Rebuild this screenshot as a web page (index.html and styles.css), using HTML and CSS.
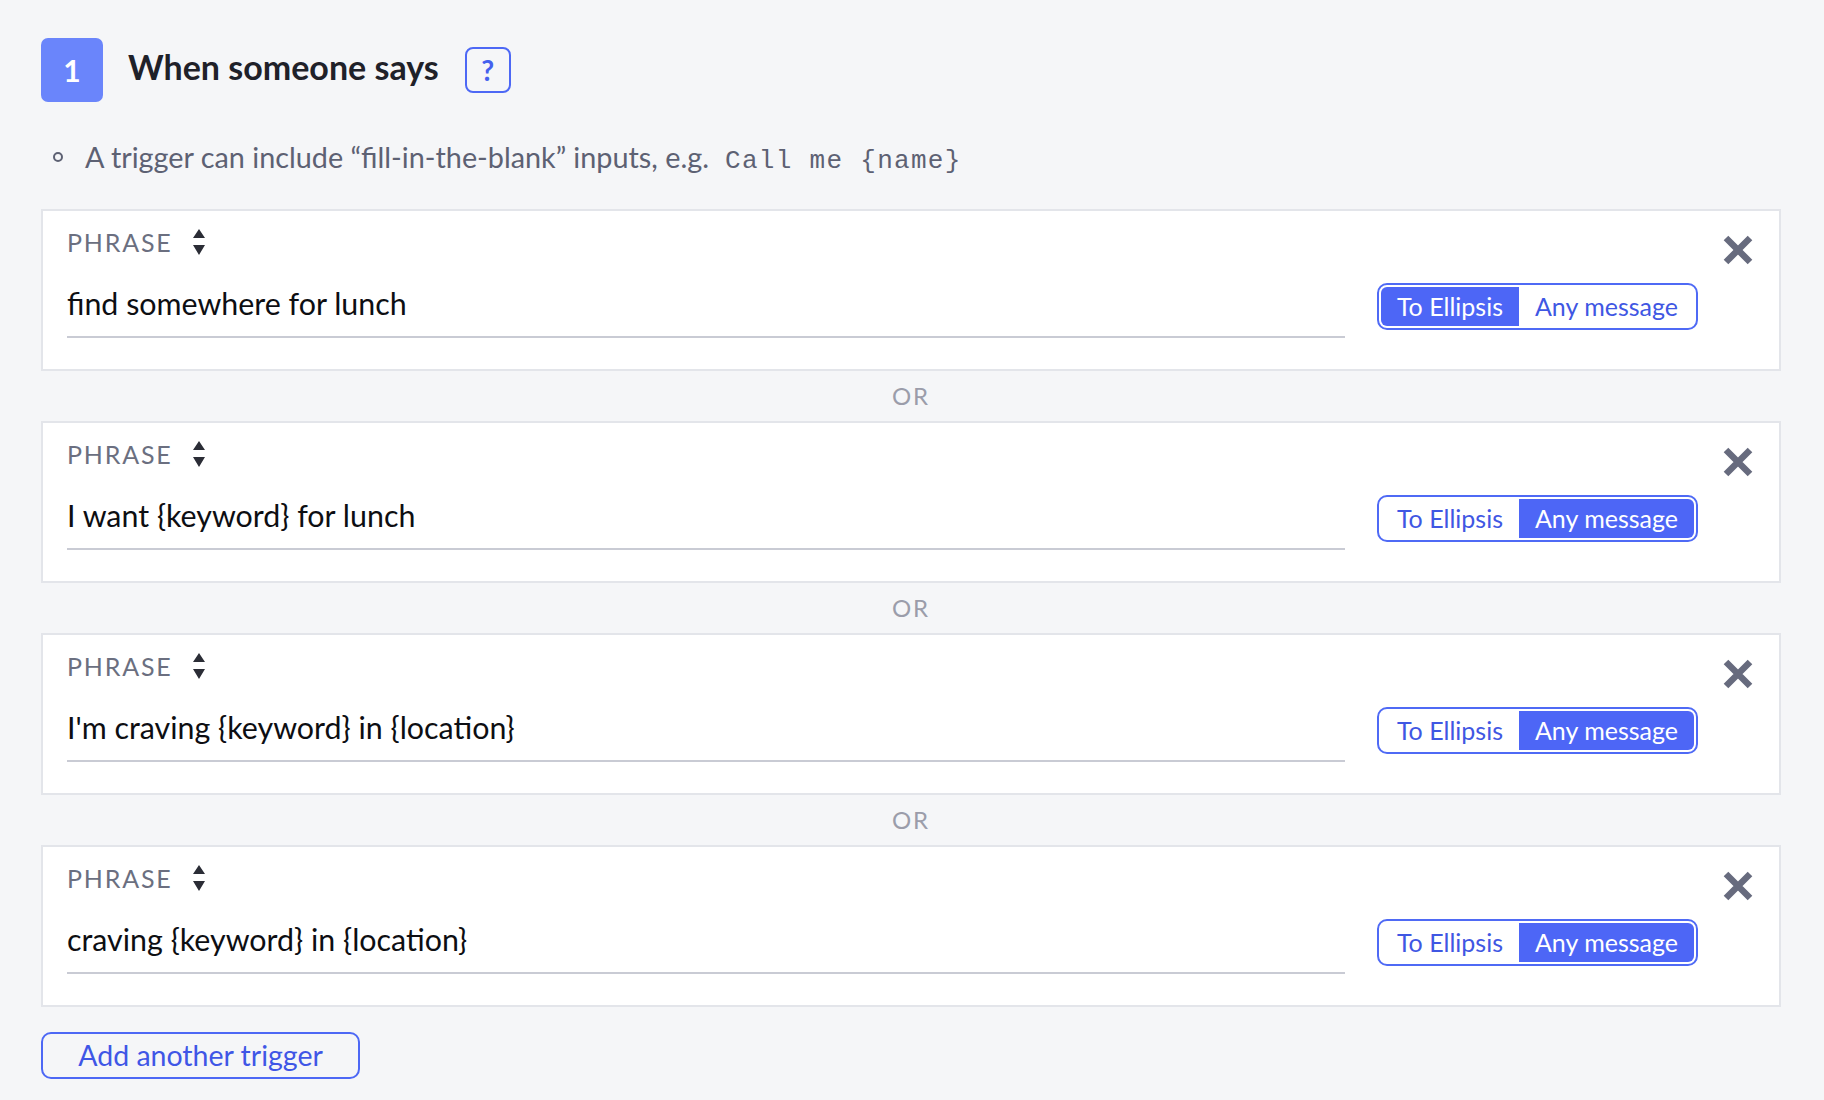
FILE: index.html
```html
<!DOCTYPE html>
<html lang="en">
<head>
<meta charset="utf-8">
<title>When someone says</title>
<link rel="stylesheet" href="styles.css">
</head>
<body>
<div class="page">
  <header class="step-head">
    <div class="step-num">1</div>
    <h2 class="step-title">When someone says</h2>
    <button class="help" type="button">?</button>
  </header>

  <ul class="hints">
    <li><span class="dot"></span><span class="hint-text">A trigger can include “fill-in-the-blank” inputs, e.g.</span><code class="code">Call me {name}</code></li>
  </ul>

  <div class="triggers">
    <div class="card">
      <div class="label">PHRASE <svg class="sort" width="12" height="26" viewBox="0 0 12 26"><path d="M6 0 L12 9 L0 9 Z M0 16 L12 16 L6 26 Z" fill="#2b2d36"/></svg></div>
      <div class="phrase">find somewhere for lunch</div>
      <div class="toggle"><span class="seg first active">To Ellipsis</span><span class="seg last">Any message</span></div>
      <button class="close" type="button" aria-label="Remove"><svg width="30" height="30" viewBox="0 0 30 30"><path d="M3 3 L27 27 M27 3 L3 27" stroke="#676b7e" stroke-width="6.5" fill="none"/></svg></button>
    </div>
    <div class="or">OR</div>
    <div class="card">
      <div class="label">PHRASE <svg class="sort" width="12" height="26" viewBox="0 0 12 26"><path d="M6 0 L12 9 L0 9 Z M0 16 L12 16 L6 26 Z" fill="#2b2d36"/></svg></div>
      <div class="phrase">I want {keyword} for lunch</div>
      <div class="toggle"><span class="seg first">To Ellipsis</span><span class="seg last active">Any message</span></div>
      <button class="close" type="button" aria-label="Remove"><svg width="30" height="30" viewBox="0 0 30 30"><path d="M3 3 L27 27 M27 3 L3 27" stroke="#676b7e" stroke-width="6.5" fill="none"/></svg></button>
    </div>
    <div class="or">OR</div>
    <div class="card">
      <div class="label">PHRASE <svg class="sort" width="12" height="26" viewBox="0 0 12 26"><path d="M6 0 L12 9 L0 9 Z M0 16 L12 16 L6 26 Z" fill="#2b2d36"/></svg></div>
      <div class="phrase">I'm craving {keyword} in {location}</div>
      <div class="toggle"><span class="seg first">To Ellipsis</span><span class="seg last active">Any message</span></div>
      <button class="close" type="button" aria-label="Remove"><svg width="30" height="30" viewBox="0 0 30 30"><path d="M3 3 L27 27 M27 3 L3 27" stroke="#676b7e" stroke-width="6.5" fill="none"/></svg></button>
    </div>
    <div class="or">OR</div>
    <div class="card">
      <div class="label">PHRASE <svg class="sort" width="12" height="26" viewBox="0 0 12 26"><path d="M6 0 L12 9 L0 9 Z M0 16 L12 16 L6 26 Z" fill="#2b2d36"/></svg></div>
      <div class="phrase">craving {keyword} in {location}</div>
      <div class="toggle"><span class="seg first">To Ellipsis</span><span class="seg last active">Any message</span></div>
      <button class="close" type="button" aria-label="Remove"><svg width="30" height="30" viewBox="0 0 30 30"><path d="M3 3 L27 27 M27 3 L3 27" stroke="#676b7e" stroke-width="6.5" fill="none"/></svg></button>
    </div>
  </div>

  <button class="add" type="button">Add another trigger</button>
</div>
</body>
</html>
```

FILE: styles.css
```css
html, body {
  margin: 0;
  padding: 0;
  background: #f5f6f8;
}
body {
  font-family: "Source Sans Pro", Lato, "Noto Sans", sans-serif;
  color: #1f2129;
}
.page {
  padding: 38px 43px 0 41px;
}
.step-head {
  display: flex;
  align-items: center;
  height: 64px;
}
.step-num {
  width: 62px;
  height: 64px;
  border-radius: 7px;
  background: #6a85fb;
  color: #fff;
  font-weight: 700;
  font-size: 30px;
  display: flex;
  align-items: center;
  justify-content: center;
}
.step-title {
  margin: 0 0 0 25px;
  padding-bottom: 7px;
  font-size: 34px;
  font-weight: 700;
  color: #1f2129;
  line-height: 40px;
}
.help {
  margin-left: 26px;
  width: 46px;
  height: 46px;
  box-sizing: border-box;
  border: 2px solid #4d68f5;
  border-radius: 8px;
  background: transparent;
  color: #4460ee;
  font-family: inherit;
  font-size: 28px;
  font-weight: 700;
  padding: 0;
  line-height: 40px;
}
.hints {
  list-style: none;
  margin: 38px 0 0 0;
  padding: 0;
}
.hints li {
  display: flex;
  align-items: baseline;
  height: 34px;
  line-height: 34px;
  font-size: 28.8px;
  color: #5d6173;
}
.dot {
  width: 10px;
  height: 10px;
  box-sizing: border-box;
  border: 2px solid #5d6173;
  border-radius: 50%;
  margin-left: 12px;
  margin-right: 22px;
  flex: none;
  align-self: center;
}
.code {
  font-family: "Liberation Mono", "DejaVu Sans Mono", monospace;
  font-size: 26px;
  letter-spacing: 1.3px;
  margin-left: 16px;
  color: #5d6173;
}
.triggers {
  margin-top: 35px;
}
.card {
  display: grid;
  grid-template-columns: 1fr auto auto;
  grid-template-rows: 26px 55px;
  row-gap: 28px;
  height: 162px;
  box-sizing: border-box;
  padding: 18px 26px 31px 24px;
  background: #fff;
  border: 2px solid #e3e5ea;
}
.label {
  grid-column: 1;
  grid-row: 1;
  display: flex;
  align-items: center;
  font-size: 25px;
  line-height: 26px;
  letter-spacing: 1.8px;
  color: #6b6f80;
}
.sort {
  margin-left: 20px;
}
.phrase {
  grid-column: 1;
  grid-row: 2;
  margin-right: 32px;
  font-size: 30.4px;
  line-height: 40px;
  padding-bottom: 13px;
  border-bottom: 2px solid #c9cbd4;
  color: #0d0e12;
}
.toggle {
  grid-column: 2;
  grid-row: 2;
  align-self: start;
  display: flex;
  height: 47px;
  box-sizing: border-box;
  border: 2px solid #4f6af5;
  border-radius: 10px;
  padding: 2px;
  background: #fff;
}
.seg {
  display: block;
  height: 39px;
  line-height: 39px;
  padding: 0 16px;
  font-size: 25px;
  color: #3f57e3;
}
.seg.active {
  background: #4d66f6;
  color: #fff;
}
.seg.first.active {
  border-radius: 6px 0 0 6px;
}
.seg.last.active {
  border-radius: 0 6px 6px 0;
}
.close {
  grid-column: 3;
  grid-row: 1 / span 2;
  align-self: start;
  margin: 6px 0 0 25px;
  padding: 0;
  width: 30px;
  height: 30px;
  border: 0;
  background: transparent;
  display: block;
}
.close svg {
  display: block;
}
.or {
  height: 50px;
  line-height: 50px;
  text-align: center;
  font-size: 24px;
  letter-spacing: 2px;
  color: #9b9daa;
}
.add {
  margin-top: 25px;
  width: 319px;
  height: 47px;
  box-sizing: border-box;
  border: 2px solid #4d68f5;
  border-radius: 10px;
  background: transparent;
  color: #3f56e6;
  font-family: inherit;
  font-size: 28.5px;
  padding: 0;
  line-height: 41px;
}
```
